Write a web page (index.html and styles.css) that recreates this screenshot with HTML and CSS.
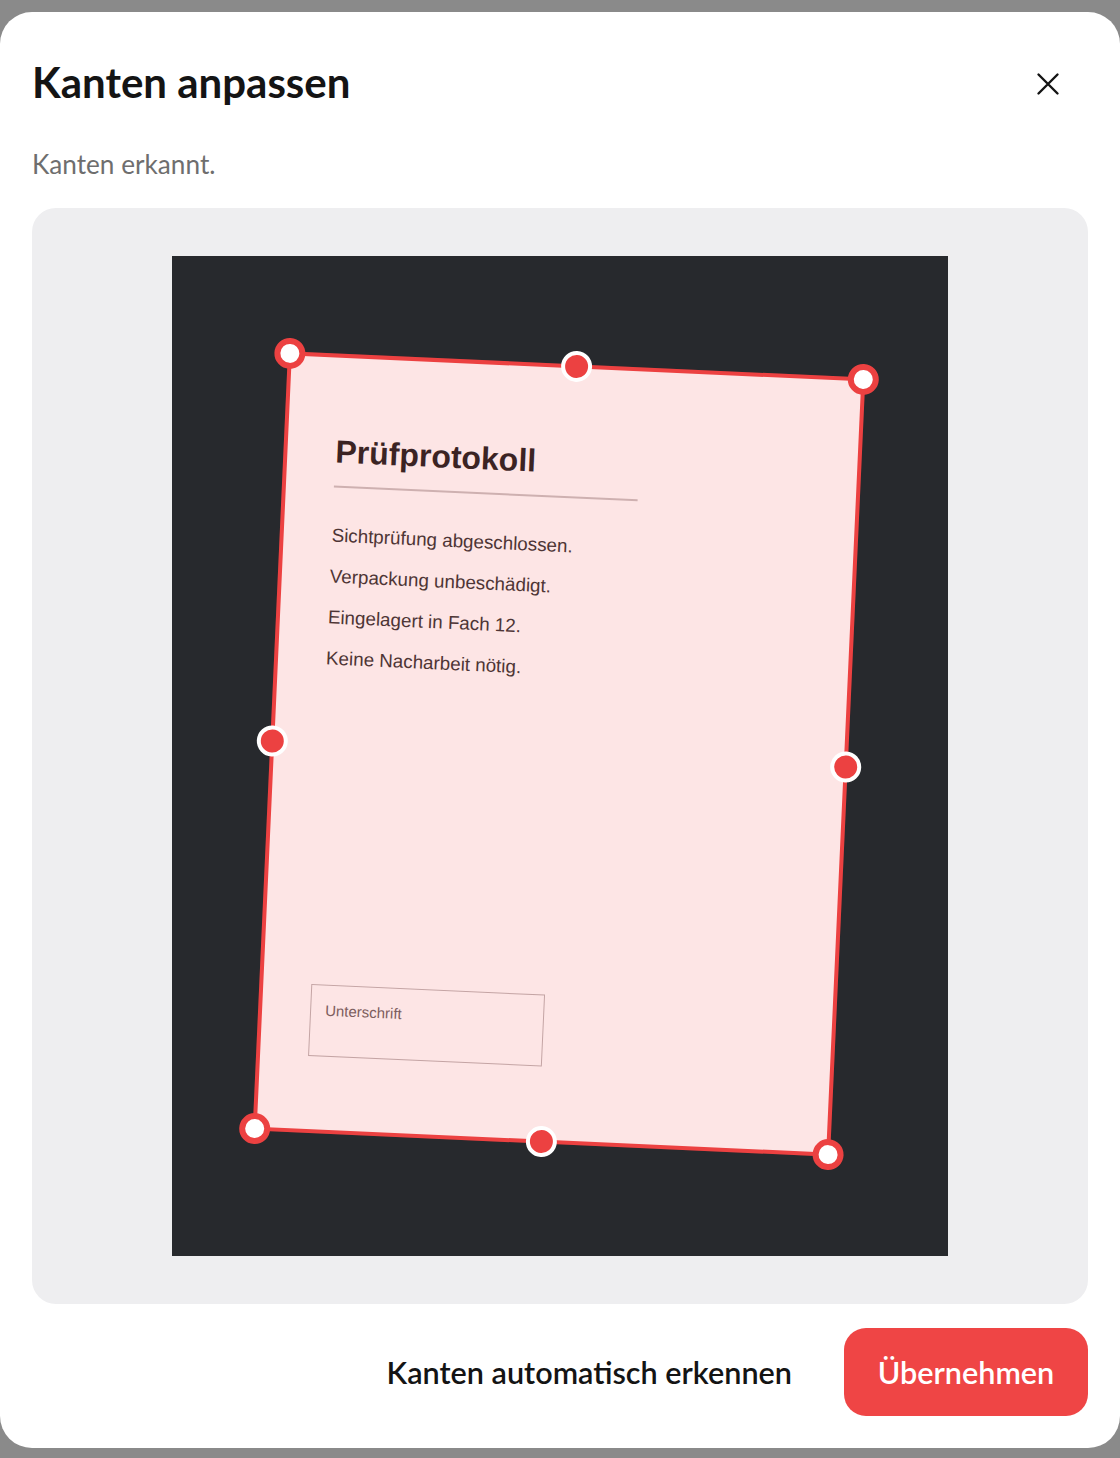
FILE: index.html
```html
<!DOCTYPE html>
<html lang="de">
<head>
<meta charset="utf-8">
<title>Kanten anpassen</title>
<link rel="stylesheet" href="styles.css">
</head>
<body>
<div class="modal">
  <header class="modal-header">
    <h1 class="modal-title">Kanten anpassen</h1>
    <button class="close-btn" aria-label="Schließen">
      <svg width="24" height="24" viewBox="0 0 24 24" fill="none" stroke="#141414" stroke-width="2.4" stroke-linecap="round"><path d="M2.5 2.5 L21.5 21.5 M21.5 2.5 L2.5 21.5"/></svg>
    </button>
  </header>
  <p class="modal-sub">Kanten erkannt.</p>
  <div class="panel">
    <div class="stage">
      <div class="paper">
        <div class="paper-content">
          <div class="doc-title">Prüfprotokoll</div>
          <div class="doc-rule"></div>
          <div class="doc-line">Sichtprüfung abgeschlossen.</div>
          <div class="doc-line">Verpackung unbeschädigt.</div>
          <div class="doc-line">Eingelagert in Fach 12.</div>
          <div class="doc-line">Keine Nacharbeit nötig.</div>
          <div class="sign-box">Unterschrift</div>
        </div>
        <div class="crop">
          <span class="handle corner tl"></span>
          <span class="handle corner tr"></span>
          <span class="handle corner br"></span>
          <span class="handle corner bl"></span>
          <span class="handle mid tm"></span>
          <span class="handle mid rm"></span>
          <span class="handle mid bm"></span>
          <span class="handle mid lm"></span>
        </div>
      </div>
    </div>
  </div>
  <footer class="modal-footer">
    <button class="btn-text">Kanten automatisch erkennen</button>
    <button class="btn-primary">Übernehmen</button>
  </footer>
</div>
</body>
</html>
```
FILE: styles.css
```css
* { box-sizing: border-box; }
html, body { margin: 0; padding: 0; }
body {
  background: #8a8a8a;
  width: 1120px;
  height: 1458px;
  padding-top: 12px;
  font-family: "Lato", "Noto Sans", sans-serif;
  overflow: hidden;
}
.modal {
  background: #ffffff;
  border-radius: 32px;
  height: 1436px;
  padding: 46px 32px 32px;
  display: flex;
  flex-direction: column;
}
.modal-header {
  display: flex;
  align-items: center;
  justify-content: space-between;
  height: 48px;
}
.modal-title {
  margin: 0;
  font-size: 42px;
  line-height: 48px;
  font-weight: 700;
  color: #141414;
  letter-spacing: 0;
}
.close-btn {
  width: 44px;
  height: 44px;
  border: 0;
  background: transparent;
  padding: 0;
  margin: 4px 18px 0 0;
  display: flex;
  align-items: center;
  justify-content: center;
}
.modal-sub {
  margin: 40px 0 0;
  font-size: 26.2px;
  line-height: 36px;
  color: #6e6e6e;
}
.panel {
  margin-top: 26px;
  background: #eeeef0;
  border-radius: 24px;
  height: 1096px;
  display: flex;
  justify-content: center;
  align-items: center;
}
.stage {
  position: relative;
  width: 776px;
  height: 1000px;
  background: #27292d;
  overflow: hidden;
}
.paper {
  position: absolute;
  left: 100px;
  top: 110px;
  width: 574px;
  height: 776px;
  background: #ffffff;
  transform: rotate(2.6deg);
  font-family: "Liberation Sans", Arial, sans-serif;
}
.paper-content {
  padding: 80px 0 0 50px;
}
.doc-title {
  font-size: 32px;
  line-height: 32px;
  font-weight: 700;
  color: #1e1e1e;
}
.doc-rule {
  width: 304px;
  height: 2px;
  background: #c9c2c2;
  margin-top: 18px;
  margin-bottom: 27px;
}
.doc-line {
  font-size: 18.8px;
  line-height: 41px;
  color: #333333;
}
.sign-box {
  margin-top: 306px;
  width: 234px;
  height: 72px;
  border: 1.5px solid #bdb4b4;
  padding: 16px 0 0 14px;
  font-size: 15px;
  line-height: 18px;
  color: #6a6262;
}
.crop {
  position: absolute;
  inset: -2px;
  border: 4px solid #ec4141;
  background: rgba(239, 68, 68, 0.14);
}
.handle {
  position: absolute;
  width: 31px;
  height: 31px;
  border-radius: 50%;
  transform: translate(-50%, -50%);
}
.handle.corner {
  background: #ffffff;
  border: 6px solid #ec4141;
}
.handle.mid {
  background: #ec4141;
  border: 4px solid #ffffff;
}
.tl { left: -2px; top: -2px; }
.tr { left: calc(100% + 2px); top: -2px; }
.br { left: calc(100% + 2px); top: calc(100% + 2px); }
.bl { left: -2px; top: calc(100% + 2px); }
.tm { left: 50%; top: -2px; }
.bm { left: 50%; top: calc(100% + 2px); }
.lm { left: -2px; top: 50%; }
.rm { left: calc(100% + 2px); top: 50%; }
.modal-footer {
  margin-top: 24px;
  display: flex;
  justify-content: flex-end;
  align-items: center;
  gap: 52px;
}
.btn-text {
  border: 0;
  background: transparent;
  padding: 0;
  font-family: inherit;
  font-size: 30.6px;
  font-weight: 600;
  color: #141414;
}
.btn-primary {
  width: 244px;
  height: 88px;
  border: 0;
  border-radius: 22px;
  background: #ef4545;
  color: #ffffff;
  font-family: inherit;
  font-size: 30.6px;
  font-weight: 600;
}
```
